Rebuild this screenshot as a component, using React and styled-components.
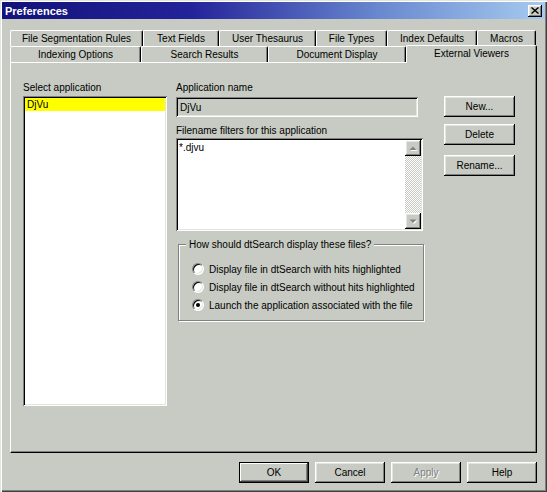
import React from 'react';
import styled, { createGlobalStyle, css } from 'styled-components';

const FACE = '#c7cbc3';
const LIGHT = '#e3e6df';
const SHADOW = '#808080';
const DARK = '#000';

const GlobalStyle = createGlobalStyle`
  html, body { margin: 0; padding: 0; background: ${FACE}; }
  body {
    font-family: "Liberation Sans", Arial, sans-serif;
    font-size: 10px;
    color: #000;
  }
  * { box-sizing: border-box; }
`;

const raised = css`
  box-shadow: inset -1px -1px ${DARK}, inset 1px 1px #fff,
    inset -2px -2px ${SHADOW}, inset 2px 2px ${LIGHT};
`;

const sunken = css`
  box-shadow: inset 1px 1px ${SHADOW}, inset -1px -1px #fff,
    inset 2px 2px ${DARK}, inset -2px -2px ${LIGHT};
`;

const Window = styled.div`
  width: 547px;
  height: 492px;
  padding: 2px;
  background: ${FACE};
  display: flex;
  flex-direction: column;
  box-shadow: inset 1px 1px ${LIGHT}, inset 2px 2px #fff,
    inset -1px -1px #404040, inset -2px -2px ${SHADOW};
`;

const TitleBar = styled.div`
  height: 17px;
  display: flex;
  align-items: center;
  justify-content: space-between;
  padding: 0 3px;
  background: linear-gradient(to right, #12127a 0%, #24249a 35%, #6a8ad0 70%, #a6caf0 100%);
  color: #fff;
  font-size: 11px;
  font-weight: bold;
`;

const CloseButton = styled.div`
  width: 14px;
  height: 12px;
  background: ${FACE};
  display: flex;
  align-items: center;
  justify-content: center;
  ${raised}
`;

const Body = styled.div`
  display: flex;
  flex-direction: column;
  padding: 11px 8px 0 8px;
`;

const TabRow = styled.div`
  display: flex;
  height: 16px;
`;

const Tab = styled.div`
  width: ${p => p.$w}px;
  height: ${p => (p.$active ? 18 : 16)}px;
  margin-top: ${p => (p.$active ? -1 : 0)}px;
  padding-bottom: ${p => (p.$active ? 2 : 0)}px;
  display: flex;
  align-items: center;
  justify-content: center;
  background: ${FACE};
  border-top: 1px solid #fff;
  border-left: 1px solid #fff;
  border-right: 1px solid ${DARK};
  border-top-left-radius: 2px;
  border-top-right-radius: 2px;
  box-shadow: inset -1px 0 ${SHADOW};
  white-space: nowrap;
  position: relative;
  z-index: ${p => (p.$active ? 2 : 'auto')};
`;

const Panel = styled.div`
  height: 391px;
  display: flex;
  padding: 18px 0 0 12px;
  border-top: 1px solid #fff;
  border-left: 1px solid #fff;
  border-right: 1px solid ${DARK};
  border-bottom: 1px solid ${DARK};
  box-shadow: inset -1px -1px ${SHADOW};
`;

const Column = styled.div`
  display: flex;
  flex-direction: column;
  width: ${p => p.$w}px;
  margin-left: ${p => p.$ml || 0}px;
`;

const Label = styled.div`
  line-height: 13px;
  height: 13px;
  margin-top: ${p => p.$mt || 0}px;
  white-space: nowrap;
`;

const ListBox = styled.div`
  margin-top: 2px;
  height: 310px;
  background: #fff;
  padding: 2px;
  ${sunken}
`;

const ListItem = styled.div`
  height: 13px;
  line-height: 13px;
  padding-left: 2px;
  background: ${p => (p.$selected ? '#ffff00' : 'transparent')};
`;

const Field = styled.div`
  margin-top: 3px;
  width: 242px;
  height: 20px;
  display: flex;
  align-items: center;
  padding: 0 4px;
  background: ${FACE};
  ${sunken}
`;

const TextBox = styled.div`
  margin-top: 1px;
  width: 247px;
  height: 93px;
  display: flex;
  padding: 2px;
  background: #fff;
  ${sunken}
`;

const TextContent = styled.div`
  flex: 1;
  padding: 1px 1px;
  line-height: 13px;
`;

const ScrollBar = styled.div`
  width: 16px;
  display: flex;
  flex-direction: column;
`;

const ScrollTrack = styled.div`
  flex: 1;
  background: repeating-conic-gradient(#fff 0 25%, ${FACE} 0 50%) 0 0 / 2px 2px;
`;

const ArrowButton = styled.div`
  width: 16px;
  height: 16px;
  background: ${FACE};
  display: flex;
  align-items: center;
  justify-content: center;
  ${raised}
`;

const GroupBox = styled.div`
  position: relative;
  margin: 13px 0 0 2px;
  width: 246px;
  height: 77px;
  padding: 15px 0 0 13px;
  border: 1px solid ${SHADOW};
  box-shadow: inset 1px 1px #fff, 1px 1px #fff;
`;

const Legend = styled.div`
  position: absolute;
  top: -7px;
  left: 7px;
  padding: 0 3px;
  line-height: 13px;
  background: ${FACE};
  white-space: nowrap;
`;

const RadioRow = styled.div`
  display: flex;
  align-items: center;
  height: 18px;
  gap: 5px;
  white-space: nowrap;
`;

const RadioCircle = styled.div`
  width: 12px;
  height: 12px;
  border-radius: 50%;
  border: 1px solid;
  border-color: ${SHADOW} #fff #fff ${SHADOW};
  background: #fff;
  box-shadow: inset 1px 1px ${DARK}, inset -1px -1px ${LIGHT};
  display: flex;
  align-items: center;
  justify-content: center;
  flex-shrink: 0;

  &::after {
    content: '';
    display: ${p => (p.$checked ? 'block' : 'none')};
    width: 4px;
    height: 4px;
    border-radius: 50%;
    background: ${DARK};
  }
`;

const Button = styled.div`
  width: ${p => p.$w}px;
  height: 21px;
  margin-top: ${p => p.$mt || 0}px;
  display: flex;
  align-items: center;
  justify-content: center;
  background: ${FACE};
  color: ${p => (p.$disabled ? SHADOW : DARK)};
  text-shadow: ${p => (p.$disabled ? '1px 1px 0 #fff' : 'none')};
  ${p =>
    p.$default
      ? css`
          box-shadow: inset 0 0 0 1px ${DARK}, inset -2px -2px #404040,
            inset 2px 2px #fff, inset -3px -3px ${SHADOW};
        `
      : raised}
`;

const ButtonBar = styled.div`
  margin-top: 9px;
  display: flex;
  justify-content: flex-end;
  gap: 6px;
`;

const Arrow = ({ down }) => (
  <svg width="8" height="5" viewBox="0 0 8 5">
    {down ? (
      <>
        <polygon points="1.5,1.5 8.5,1.5 5,5" fill="#fff" />
        <polygon points="0.5,0.5 7.5,0.5 4,4" fill={SHADOW} />
      </>
    ) : (
      <>
        <polygon points="1.5,5 8.5,5 5,1.5" fill="#fff" />
        <polygon points="0.5,4 7.5,4 4,0.5" fill={SHADOW} />
      </>
    )}
  </svg>
);

const row1 = [
  ['File Segmentation Rules', 133],
  ['Text Fields', 76],
  ['User Thesaurus', 97],
  ['File Types', 71],
  ['Index Defaults', 90],
  ['Macros', 59],
];

const row2 = [
  ['Indexing Options', 131],
  ['Search Results', 127],
  ['Document Display', 138],
  ['External Viewers', 131],
];

const options = [
  'Display file in dtSearch with hits highlighted',
  'Display file in dtSearch without hits highlighted',
  'Launch the application associated with the file',
];

export default function App() {
  return (
    <>
      <GlobalStyle />
      <Window>
        <TitleBar>
          <span>Preferences</span>
          <CloseButton>
            <svg width="8" height="7" viewBox="0 0 8 7">
              <path d="M0.5 0.5 L7.5 6.5 M7.5 0.5 L0.5 6.5" stroke="#000" strokeWidth="1.4" />
            </svg>
          </CloseButton>
        </TitleBar>
        <Body>
          <TabRow>
            {row1.map(([t, w]) => (
              <Tab key={t} $w={w}>{t}</Tab>
            ))}
          </TabRow>
          <TabRow>
            {row2.map(([t, w]) => (
              <Tab key={t} $w={w} $active={t === 'External Viewers'}>{t}</Tab>
            ))}
          </TabRow>
          <Panel>
            <Column $w={144}>
              <Label>Select application</Label>
              <ListBox>
                <ListItem $selected>DjVu</ListItem>
              </ListBox>
            </Column>
            <Column $w={248} $ml={9}>
              <Label>Application name</Label>
              <Field>DjVu</Field>
              <Label $mt={7}>Filename filters for this application</Label>
              <TextBox>
                <TextContent>*.djvu</TextContent>
                <ScrollBar>
                  <ArrowButton><Arrow /></ArrowButton>
                  <ScrollTrack />
                  <ArrowButton><Arrow down /></ArrowButton>
                </ScrollBar>
              </TextBox>
              <GroupBox>
                <Legend>How should dtSearch display these files?</Legend>
                {options.map((o, i) => (
                  <RadioRow key={o}>
                    <RadioCircle $checked={i === 2} />
                    <span>{o}</span>
                  </RadioRow>
                ))}
              </GroupBox>
            </Column>
            <Column $w={71} $ml={20}>
              <Button $w={71} $mt={15}>New...</Button>
              <Button $w={71} $mt={7}>Delete</Button>
              <Button $w={71} $mt={10}>Rename...</Button>
            </Column>
          </Panel>
          <ButtonBar>
            <Button $w={70} $default>OK</Button>
            <Button $w={70}>Cancel</Button>
            <Button $w={70} $disabled>Apply</Button>
            <Button $w={70}>Help</Button>
          </ButtonBar>
        </Body>
      </Window>
    </>
  );
}
